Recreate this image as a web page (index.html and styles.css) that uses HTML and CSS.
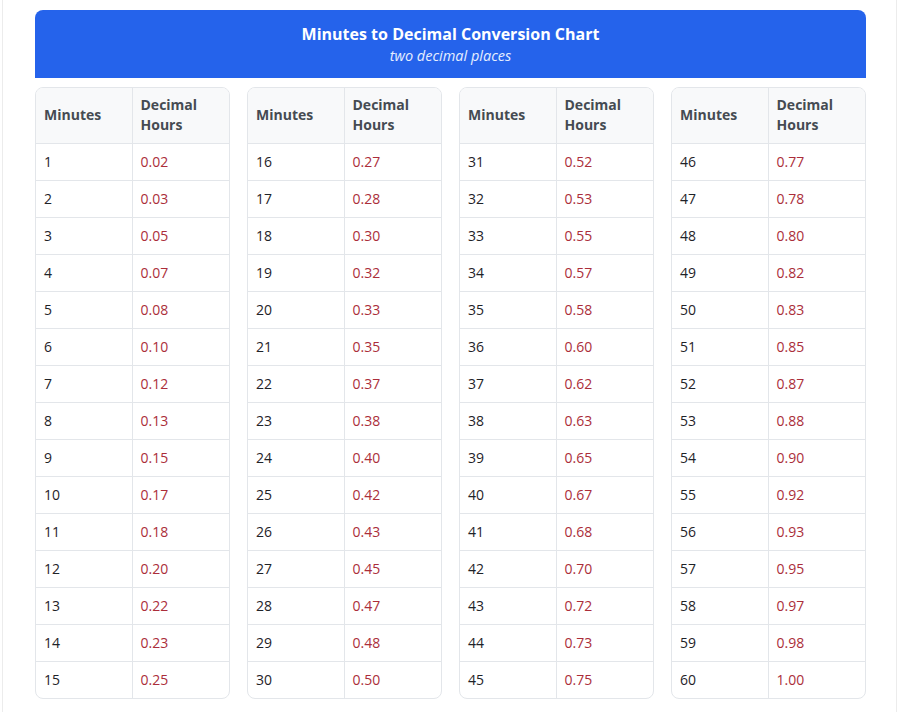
FILE: index.html
```html
<!DOCTYPE html>
<html lang="en">
<head>
<meta charset="utf-8">
<title>Minutes to Decimal Conversion Chart</title>
<link rel="stylesheet" href="styles.css">
</head>
<body>
<div class="page">
  <header class="banner">
    <h1 class="title">Minutes to Decimal Conversion Chart</h1>
    <p class="subtitle">two decimal places</p>
  </header>
  <div class="tables" id="tables"></div>
</div>
<script>
  var wrap = document.getElementById('tables');
  for (var t = 0; t < 4; t++) {
    var html = '<table class="chart"><colgroup><col class="col-min"><col class="col-dec"></colgroup><thead><tr><th class="c-min">Minutes</th><th class="c-dec">Decimal<br>Hours</th></tr></thead><tbody>';
    for (var r = 1; r <= 15; r++) {
      var m = t * 15 + r;
      html += '<tr><td class="c-min">' + m + '</td><td class="c-dec val">' + (m / 60).toFixed(2) + '</td></tr>';
    }
    html += '</tbody></table>';
    wrap.insertAdjacentHTML('beforeend', html);
  }
</script>
</body>
</html>
```

FILE: styles.css
```css
html, body {
  margin: 0;
  padding: 0;
  background: #ffffff;
}
body {
  font-family: "Open Sans", "Noto Sans", "Liberation Sans", sans-serif;
  color: #212529;
}
.page {
  margin: 0 3px 0 2px;
  border-left: 1px solid #ececec;
  border-right: 1px solid #ececec;
  padding: 10px 30px 14px 32px;
  min-height: 688px;
}
.banner {
  background: #2563eb;
  border-radius: 8px 8px 0 0;
  color: #ffffff;
  text-align: center;
  padding: 13px 0 12px;
}
.title {
  margin: 0;
  font-size: 16px;
  font-weight: 700;
  line-height: 22px;
}
.subtitle {
  margin: 1px 0 0;
  font-size: 14.5px;
  font-style: italic;
  line-height: 20px;
  color: #e6eeff;
}
.tables {
  display: grid;
  grid-template-columns: repeat(4, 1fr);
  column-gap: 17px;
  margin-top: 9px;
}
.chart {
  width: 100%;
  border-collapse: separate;
  border-spacing: 0;
  border: 1px solid #e3e6ea;
  border-radius: 8px;
  overflow: hidden;
  font-size: 14px;
  table-layout: fixed;
}
.col-min,
.col-dec {
  width: 50%;
}
.chart th {
  background: #f8f9fa;
  color: #454b52;
  font-weight: 700;
  text-align: left;
  padding: 7px 8px 8px;
  line-height: 20px;
  border-bottom: 1px solid #e3e6ea;
}
.chart td {
  padding: 8px 8px;
  line-height: 20px;
  border-bottom: 1px solid #e3e6ea;
  color: #1f2328;
}
.chart tr:last-child td {
  border-bottom: none;
}
.chart .c-min {
  border-right: 1px solid #e3e6ea;
}
.chart td.val {
  color: #ab2e3a;
}
```
